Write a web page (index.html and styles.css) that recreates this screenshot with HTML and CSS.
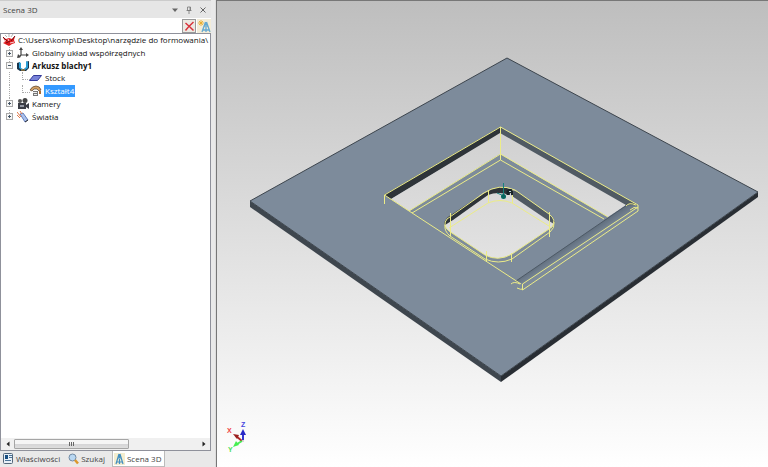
FILE: index.html
```html
<!DOCTYPE html>
<html lang="pl">
<head>
<meta charset="utf-8">
<title>Scena 3D</title>
<link rel="stylesheet" href="styles.css">
</head>
<body>
<div class="app">
  <aside class="panel">
    <header class="titlebar">
      <h1 class="title">Scena 3D</h1>
      <button class="tool" aria-label="Menu"><svg width="8" height="8" viewBox="0 0 8 8"><path d="M1 2.500h6L4 6z" fill="#666"/></svg></button>
      <button class="tool" aria-label="Przypnij"><svg width="8" height="8" viewBox="0 0 8 8"><path d="M2.500 1h3v3.500h-3zM1.500 4.500h5M4 5v3M5 1v3" fill="none" stroke="#777" stroke-width=".8"/></svg></button>
      <button class="tool" aria-label="Zamknij"><svg width="8" height="8" viewBox="0 0 8 8"><path d="M1.500 1.500l5 5M6.500 1.500l-5 5" stroke="#666"/></svg></button>
    </header>
    <div class="toolbar">
      <button class="action pressed" aria-label="Usuń"><svg width="11" height="11" viewBox="0 0 11 11"><path d="M1.500 2Q5 5 9.500 9.500M9.500 1Q5 5 1.500 9.500" fill="none" stroke="#d8323a" stroke-width="1.500"/></svg></button>
      <button class="action" aria-label="Nowa scena"><svg width="13" height="13" viewBox="0 0 13 13"><path d="M7.500 2L4 12M8.500 2l3.500 10M8 2v3M6 6h4M5 10h6M8 7v5" fill="none" stroke="#65a9d0" stroke-width="1.300"/><path d="M3 0v6M0 3h6M1 1l4 4M5 1L1 5" stroke="#e8a922" stroke-width=".8"/></svg></button>
    </div>
    <div class="tree-box">
      <ul class="tree">
        <li class="row root"><svg class="icon" width="14" height="12" viewBox="0 0 14 12"><path d="M1 3l3 2 3-1 3 1 3-3-1 4 1 3-3 1-3 2-4-2-2-1 2-1z" fill="#dc1c20"/><path d="M1 3l4 4M13 2L9 7M4 9l4-2" stroke="#7c090d"/><path d="M2 6l2 1M8 9l4-1M6 5l1 2" stroke="#fff" stroke-width=".8"/><path d="M7 0v3M3 1l2 2M11 0L9 3" stroke="#999" stroke-width=".7"/></svg><span class="label">C:\Users\komp\Desktop\narzędzie do formowania\</span></li>
        <li class="row"><button class="toggle plus" aria-label="Rozwiń"></button><svg class="icon" width="12" height="12" viewBox="0 0 12 12"><path d="M4 2v6h6M4 8L1.500 10.500" fill="none" stroke="#444" stroke-width="1.200"/><path d="M4 0l2 3H2zM12 8L9 6v4zM0 11l1-4 3 3z" fill="#444"/></svg><span class="label">Globalny układ współrzędnych</span></li>
        <li class="row"><button class="toggle" aria-label="Zwiń"></button><svg class="icon" width="12" height="12" viewBox="0 0 12 12"><path d="M0 3l3-1v6l2 1h2l2-1V2l3-1v7l-3 3H3L0 9z" fill="#17344c"/><path d="M2 2l2 1v5l2 1-1 1-3-2zM9 1l2 1v6L8 10l-1-1 2-2z" fill="#2a9ed6"/><path d="M4 10h4" stroke="#d6942c"/></svg><span class="label strong">Arkusz blachy1</span></li>
        <li class="row child"><svg class="icon" width="14" height="12" viewBox="0 0 14 12"><path d="M4.500 3.500h8l-4 5h-8z" fill="#7882d8" stroke="#343a99"/></svg><span class="label">Stock</span></li>
        <li class="row child"><svg class="icon" width="14" height="12" viewBox="0 0 14 12"><path d="M1 5Q3 1 7 1t5 4L10 6 8 4H5L3 6z" fill="#d3a063" stroke="#55422f" stroke-width=".7"/><path d="M4 6h5v5H4z" fill="#777"/><path d="M4 7.500h4M5 9.500h3" stroke="#eee"/><path d="M10 6h2v3h-2z" fill="#a96b34"/></svg><span class="label selected">Kształt4</span></li>
        <li class="row"><button class="toggle plus" aria-label="Rozwiń"></button><svg class="icon" width="12" height="12" viewBox="0 0 12 12"><path d="M1 5h8v6H1zM9 7l3-2v6L9 9z" fill="#3b3d45"/><circle cx="3" cy="3" r="2" fill="#555"/><circle cx="8" cy="2.500" r="2.500" fill="#444"/><path d="M3 7h4v2H3z" fill="#969aa5"/></svg><span class="label">Kamery</span></li>
        <li class="row"><button class="toggle plus" aria-label="Rozwiń"></button><svg class="icon" width="12" height="12" viewBox="0 0 12 12"><path d="M3 3l3-1 5 7-3 2z" fill="#abc1ed" stroke="#4665ac" stroke-width=".8"/><path d="M0 1l4 5M3 0l2 3M0 4l3 3" stroke="#e37847"/><path d="M8 11l3-2" stroke="#333"/></svg><span class="label">Światła</span></li>
      </ul>
      <div class="scroll">
        <button class="arrow" aria-label="W lewo"><svg width="6" height="8" viewBox="0 0 6 8"><path d="M4.500 1.500v5L1.500 4z" fill="#222"/></svg></button>
        <div class="track"><div class="thumb"><i></i><i></i><i></i></div></div>
        <button class="arrow" aria-label="W prawo"><svg width="6" height="8" viewBox="0 0 6 8"><path d="M1.500 1.500v5l3-2.500z" fill="#222"/></svg></button>
      </div>
    </div>
    <nav class="tabs">
      <button class="tab"><svg width="11" height="12" viewBox="0 0 11 12"><rect x=".5" y=".5" width="9" height="10" rx="1" fill="#e8f0f7" stroke="#52677a"/><path d="M2 2h3v4H2z" fill="#174e81"/><path d="M6 2.500h3M6 4.500h3M2 7.500h6" stroke="#4c7599"/></svg>Właściwości</button>
      <button class="tab"><svg width="11" height="12" viewBox="0 0 11 12"><circle cx="4.500" cy="4.500" r="3.500" fill="#b8d7f2" stroke="#718ba5"/><path d="M7 7l3 3.500" stroke="#dc982c" stroke-width="2.500"/></svg>Szukaj</button>
      <button class="tab active"><svg width="11" height="12" viewBox="0 0 11 12"><path fill="#f3edcf" d="M0 0h11v12H0z"/><path d="M5 1L2 11M6 1l3 10M5.500 1v4M4 5h3M3 9h5M5.500 6v5" fill="none" stroke="#438fc0" stroke-width="1.200"/></svg>Scena 3D</button>
    </nav>
  </aside>
  <main class="viewport">
    <svg class="scene" viewBox="217 0 551 467" preserveAspectRatio="xMidYMin meet" role="img" aria-label="Arkusz blachy z wycięciem">
      <defs>
        <linearGradient id="backdrop" gradientUnits="userSpaceOnUse" x1="0" y1="0" x2="0" y2="467"><stop stop-color="#bebebe"/><stop offset="1" stop-color="#fff"/></linearGradient>
        <linearGradient id="bend" gradientUnits="userSpaceOnUse" x1="570" y1="242" x2="576" y2="251"><stop stop-color="#5d6b7a"/><stop offset="1" stop-color="#7d8b9b"/></linearGradient>
      </defs>
      <path d="M250 201L501 376V382L250 207z" fill="#3e464e"/>
      <path d="M501 376L758 192V197L501 382z" fill="#292e34"/>
      <path d="M507 58L758 192 501 376 250 201z" fill="#7d8b9b" stroke="#3d454d"/>
      <path d="M384 195L500 127V134L391 199z" fill="#2e3439"/>
      <path d="M500 127L638 205 626 206 500 134z" fill="#505a63"/>
      <path d="M391 199L500 133 626 205 608 217 500 154 409 211z" fill="url(#backdrop)"/>
      <path d="M627 205L516 281 524 284 638 207z" fill="url(#bend)"/>
      <path d="M627 205L516 281" stroke="#4d5965"/>
      <path d="M447 220L483 193Q500 183 518 192L549 214Q557 220 552 227L512 254Q498 262 485 255L449 231Q442 226 447 220z" fill="url(#backdrop)"/>
      <path d="M445 225Q443 222 448 217L484 193Q499 184 510 189V195Q498 191 488 195L453 220z" fill="#2e3439"/>
      <path d="M509 189L518 192 549 214Q556 219 554 224L549 221 512 196z" fill="#505a63"/>
      <g class="wire">
        <path d="M384.500 204V195L500.500 127 638 205V211L522.500 290V284L638 207M384.500 195L521 284M500.500 127V154M409 211L500.500 154 608 217M412 213L500.500 160 604 219M500.500 154V160"/>
        <path d="M511 284Q514 281 520 284M517 288Q521 290 523 289M626 206Q629 202 636 205M630 210Q634 206 638 208"/>
        <path d="M447 219L484 193Q499 183 515 190L549 214Q557 220 552 227L512 254Q498 262 485 255L449 231Q442 225 447 219"/>
        <path d="M445 225Q444 231 450 236L485 259Q498 265 512 259L550 232Q555 228 554 222M488.500 190V203M512.500 190V203M449 228L488 203Q500 198 512 203L549 226M450.500 213V236M549.500 212V237M486.500 251V261M511.500 253V262"/>
      </g>
      <path d="M503.500 183V196M497 193l7 3" fill="none" stroke="#16827d"/><circle cx="503.500" cy="196.500" r="2.500" fill="#08665f"/><path d="M506.500 195v-4l2-2h3l1.500 2v4h-2v-2h-2v2z" fill="#182227"/><path d="M509 191.500h2" stroke="#dff" stroke-width=".8"/>
      <path d="M242 441l-6-5" stroke="#ab2929" stroke-width="2"/><path d="M233 434l6 1-2 4z" fill="#9b2020"/>
      <path d="M243 440v-7" stroke="#3434cf" stroke-width="2"/><path d="M243 429l3 6h-6z" fill="#2828c6"/>
      <path d="M242 441l-5 3" stroke="#48ed57" stroke-width="2"/><path d="M233 447l3-6 3 4z" fill="#45ef52"/><circle cx="243" cy="441" r="1" fill="#ccc"/>
      <g class="axis"><text x="227" y="433" fill="#f04444">X</text><text x="241" y="427" fill="#4646df">Z</text><text x="228" y="452" fill="#48df57">Y</text></g>
    </svg>
  </main>
</div>
</body>
</html>
```
FILE: styles.css
```css
* { box-sizing: border-box; }
body { margin: 0; font: 8px/12px "Open Sans", "Noto Sans", sans-serif; color: #111; background: #e9e9e9; }
button { margin: 0; padding: 0; border: 0; background: none; font: inherit; color: inherit; }
svg { display: block; flex: none; }
.app { display: flex; height: 100vh; }
.panel { display: flex; flex-direction: column; flex: 0 0 216px; min-width: 0; padding-right: 4px; border-right: 1px solid #ddd; }
.titlebar { display: flex; align-items: center; height: 18px; padding: 0 4px 0 3px; gap: 6px; background: #e6e6e6; border-top: 1px solid #ccc; }
.title { flex: 1; margin: 0; font-size: 8px; font-weight: 400; color: #444; }
.toolbar { display: flex; justify-content: flex-end; gap: 1px; height: 15px; padding: 1px 0; background: #fff; }
.action { display: grid; place-items: center; width: 14px; height: 14px; background: #f2ecd8; }
.pressed { border: 1px solid #999; background: #ece9e2; }
.tree-box { display: flex; flex-direction: column; justify-content: space-between; flex: 1; min-height: 0; border: 1px solid #8f919b; background: #fff; }
.tree { display: grid; grid-template-rows: repeat(7, 1fr); height: 89px; margin: 0; padding: 0; list-style: none; }
.row { position: relative; display: flex; align-items: center; min-height: 0; padding-left: 5px; gap: 2px; white-space: nowrap; }
.root { padding-left: 1px; gap: 1px; }
.child { padding-left: 28px; gap: 1px; }
.toggle { display: grid; place-items: center; width: 7px; height: 7px; margin-right: 2px; border: 1px solid #aaa; background: linear-gradient(#456, #456) center / 3px 1px no-repeat #f7f7f7; }
.plus { background: linear-gradient(#456, #456) center / 3px 1px no-repeat, linear-gradient(#456, #456) center / 1px 3px no-repeat, #f7f7f7; }
.row:not(.root):not(.child)::before { content: ""; position: absolute; left: 8px; top: 0; height: 3px; border-left: 1px dotted #aaa; }
.child::before { content: ""; position: absolute; left: 21px; top: 0; width: 7px; height: 7px; border: dotted #aaa; border-width: 0 0 1px 1px; }
.child::after { content: ""; position: absolute; left: 8px; top: 0; height: 13px; border-left: 1px dotted #aaa; }
.label { padding: 0 1px; }
.strong { font-weight: 700; }
.selected { background: #3399ff; color: #fff; }
.scroll { display: flex; align-items: center; height: 12px; background: #f0f0f0; }
.arrow { display: grid; place-items: center; width: 13px; height: 11px; }
.track { flex: 1; }
.thumb { display: flex; justify-content: center; align-items: center; gap: 1px; width: 63%; height: 10px; border: 1px solid #a5a5a5; border-radius: 1px; background: linear-gradient(#f5f5f5 45%, #d4d4d6 50%, #dedede); }
.thumb i { width: 1px; height: 4px; background: #666; }
.tabs { display: flex; height: 16px; padding-left: 2px; gap: 4px; color: #444; }
.tab { display: flex; align-items: center; gap: 2px; height: 16px; padding: 0 3px 0 1px; white-space: nowrap; }
.active { border: 1px solid #bbb; border-top: 0; background: #fff; }
.viewport { flex: 1; min-width: 0; border-left: 1px solid #777; background: linear-gradient(#777 1px, transparent 1px), linear-gradient(#bebebe, #fff); }
.scene { width: 100%; height: 100%; }
.wire { fill: none; stroke: #ecec88; stroke-width: 1; }
.axis { font: bold 7px "Liberation Sans", sans-serif; }
```
